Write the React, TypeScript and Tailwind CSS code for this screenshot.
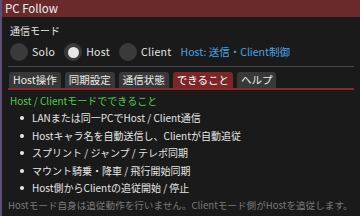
const font = { fontFamily: '"Noto Sans CJK JP", "Noto Sans", sans-serif' };

const modes = [
  { label: 'Solo', on: false },
  { label: 'Host', on: true },
  { label: 'Client', on: false },
];

const tabs = [
  { label: 'Host操作', active: false },
  { label: '同期設定', active: false },
  { label: '通信状態', active: false },
  { label: 'できること', active: true },
  { label: 'ヘルプ', active: false },
];

const features = [
  'LANまたは同一PCでHost / Client通信',
  'Hostキャラ名を自動送信し、Clientが自動追従',
  'スプリント / ジャンプ / テレポ同期',
  'マウント騎乗・降車 / 飛行開始同期',
  'Host側からClientの追従開始 / 停止',
];

function Radio({ on }: { on: boolean }) {
  return (
    <div className="flex h-[18px] w-[18px] items-center justify-center rounded-full bg-[#3a3a3a]">
      {on && <div className="h-[11px] w-[11px] rounded-full bg-[#e8e8e8]" />}
    </div>
  );
}

export default function App() {
  return (
    <div className="flex h-[216px] w-[360px] overflow-hidden bg-[#4e4560]" style={font}>
      <div className="w-[2px] shrink-0 bg-[#5d5070]" />
      <div className="flex flex-1 flex-col bg-[#1a1a1a] text-[#e6e6e6]">
        {/* title bar */}
        <div className="flex h-[17px] items-center bg-[#6a2a2c] pl-[3px] text-[11.5px] leading-none text-[#f0f0f0]">
          PC Follow
        </div>

        <div className="flex flex-col px-[6px]">
          <div className="mt-[9px] pl-[2px] text-[10px] leading-none">通信モード</div>

          {/* radios */}
          <div className="mt-[7px] flex items-center pl-[2px] text-[10.5px] leading-none">
            {modes.map((m) => (
              <div key={m.label} className="mr-[9px] flex items-center gap-[4px]">
                <Radio on={m.on} />
                <span className="tracking-[0.3px]">{m.label}</span>
              </div>
            ))}
            <span className="text-[#4aa4e4]">Host: 送信・Client制御</span>
          </div>

          <div className="mt-[5px] h-px bg-[#4a4a4e]" />

          {/* tabs */}
          <div className="mt-[5px] flex items-end gap-[4px] pl-[1px] text-[10.5px] leading-none">
            {tabs.map((t) => (
              <div
                key={t.label}
                className={
                  t.active
                    ? 'flex h-[16px] items-center rounded-t-[3px] bg-[#7c2628] px-[4px] text-white'
                    : 'flex h-[16px] items-center rounded-t-[3px] bg-[#383838] px-[4px] text-[#ececec]'
                }
              >
                {t.label}
              </div>
            ))}
          </div>
          <div className="h-[1.5px] bg-[#8c2a2a]" />

          <div className="mt-[6px] pl-[2px] text-[10px] leading-none text-[#4ccf4c]">
            Host / Clientモードでできること
          </div>

          <ul className="mt-[4px] flex flex-col text-[10px] leading-none">
            {features.map((f) => (
              <li key={f} className="flex h-[17.5px] items-center">
                <span className="ml-[12px] mr-[8px] h-[4px] w-[4px] rounded-full bg-[#e8e8e8]" />
                <span>{f}</span>
              </li>
            ))}
          </ul>

          <div className="mt-[4px] whitespace-nowrap text-[9.6px] leading-none text-[#7a7a7a]">
            Hostモード自身は追従動作を行いません。Clientモード側がHostを追従します。
          </div>
        </div>
      </div>
    </div>
  );
}
